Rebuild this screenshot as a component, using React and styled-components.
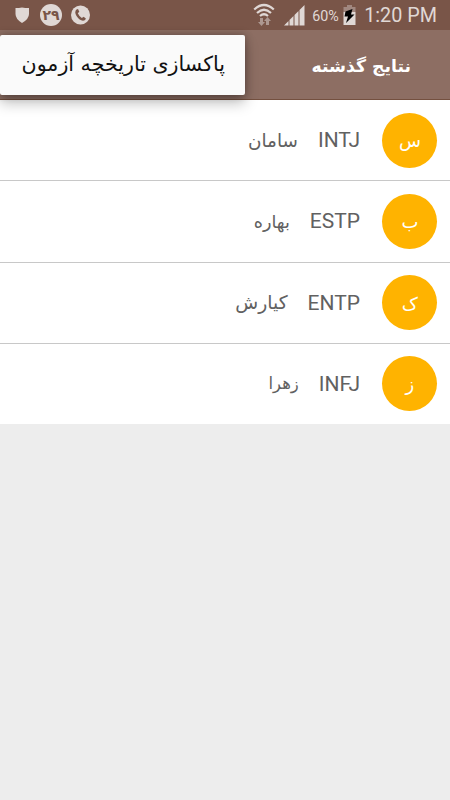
import React from "react";
import styled, { createGlobalStyle } from "styled-components";

const GlobalStyle = createGlobalStyle`
  * {
    box-sizing: border-box;
  }
  body {
    margin: 0;
    background: #ededed;
    font-family: Roboto, "DejaVu Sans", sans-serif;
  }
`;

const Screen = styled.div`
  position: relative;
  width: 450px;
  height: 800px;
  overflow: hidden;
  background: #ededed;
`;

const StatusBar = styled.header`
  display: flex;
  align-items: center;
  justify-content: space-between;
  height: 30px;
  padding: 0 13px 0 14px;
  background: #795548;
  color: #e0d8d5;
`;

const StatusGroup = styled.div`
  display: flex;
  align-items: center;
  height: 30px;
  gap: ${props => props.$gap || 0}px;
`;

const Day = styled.span`
  display: flex;
  align-items: center;
  justify-content: center;
  width: 22px;
  height: 22px;
  margin-left: 1px;
  border-radius: 50%;
  background: #e0d8d5;
  color: #795548;
  font: bold 14px/22px "DejaVu Sans", sans-serif;
`;

const Battery = styled.span`
  width: 28px;
  margin: 1px 3px 0 7px;
  font-size: 14.3px;
  white-space: nowrap;
`;

const Clock = styled.span`
  margin: 2px 0 0 8px;
  font-size: 19.8px;
  line-height: 30px;
  white-space: nowrap;
`;

const Toolbar = styled.div`
  display: flex;
  align-items: center;
  height: 70px;
  padding: 0 39px 0 0;
  border-bottom: 1px solid #74503f;
  background: #8d6e63;
`;

const Title = styled.h1`
  margin: 3px 0 0;
  color: #fff;
  font: bold 17.3px/30px "DejaVu Sans", sans-serif;
`;

const Menu = styled.div`
  position: absolute;
  top: 35px;
  left: 0;
  display: flex;
  align-items: center;
  width: 245px;
  height: 60px;
  padding: 0 20px 2px;
  border-radius: 2px;
  background: #fafafa;
  box-shadow: 0 8px 14px rgba(0, 0, 0, 0.25), 0 0 8px rgba(0, 0, 0, 0.3);
`;

const MenuItem = styled.span`
  color: #111;
  font: 20.6px/30px "DejaVu Sans", sans-serif;
  white-space: nowrap;
`;

const List = styled.ul`
  margin: 0;
  padding: 0;
  list-style: none;
`;

const Row = styled.li`
  display: flex;
  align-items: center;
  height: 81.33px;
  padding: 0 12.6px;
  border-bottom: 1px solid #c8c8c8;
  background: #fff;

  &:last-child {
    height: 80px;
    border-bottom: 0;
  }
`;

const Avatar = styled.div`
  display: flex;
  align-items: center;
  justify-content: center;
  width: 55px;
  height: 55px;
  padding-top: 2px;
  border-radius: 50%;
  background: #ffb300;
  color: #fff;
  font: 18px/30px "DejaVu Sans", sans-serif;
`;

const Type = styled.span`
  margin-right: 22.4px;
  color: #616161;
  font-size: 21px;
  line-height: 30px;
`;

const Name = styled.span`
  margin: 1px 20px 0 0;
  color: #616161;
  font: ${props => props.$size}px/30px "DejaVu Sans", sans-serif;
`;

const results = [
  { letter: "س", type: "INTJ", name: "سامان", size: 18.4 },
  { letter: "ب", type: "ESTP", name: "بهاره", size: 17.6 },
  { letter: "ک", type: "ENTP", name: "کیارش", size: 18.8 },
  { letter: "ز", type: "INFJ", name: "زهرا", size: 16.5 }
];

const ShieldIcon = () => (
  <svg width="16" height="18" viewBox="0 0 16 18" fill="#e0d8d5">
    <path d="M1.500 2Q5 2 8 1.500Q11 2 15 2V8Q15 13 8 17Q1.500 13 1.500 8Z" />
  </svg>
);

const CallIcon = () => (
  <svg width="20" height="20" viewBox="0 0 20 20">
    <circle cx="9.500" cy="10" r="9.500" fill="#e0d8d5" />
    <path
      d="M5.500 4.500Q3 7 5.500 11Q8.500 15.500 12 15.700Q14 15.500 15 13.700L12.700 11.800L10.800 13Q8 11 6.800 8.200L8.300 6.800L7 4Z"
      fill="#795548"
    />
  </svg>
);

const WifiIcon = () => (
  <svg width="22" height="24" viewBox="0 0 22 24" fill="none">
    <g stroke="#e0d8d5" strokeWidth="2.200">
      <path d="M1.200 6.500Q11 -2.500 20.800 6.500" />
      <path d="M4 10Q11 3.500 18 10" />
      <path d="M7 13Q11 9.500 15 13" />
    </g>
    <path d="M7 15H10V19H12L8.500 23L5 19H7Z" fill="#ad9891" />
    <path d="M13 22V18H11L14.500 14L18 18H16V22Z" fill="#ad9891" />
  </svg>
);

const SignalIcon = () => (
  <svg width="21" height="21" viewBox="0 0 21 21" fill="#e0d8d5">
    <path d="M0 20.500L4.500 16V20.500ZM5.500 20.500V15L9.500 11V20.500ZM10.500 20.500V10L14.500 6V20.500ZM15.500 20.500V5L20.500 0V20.500Z" />
  </svg>
);

const BatteryIcon = () => (
  <svg width="13" height="20" viewBox="0 0 13 20">
    <path d="M4 0H9V2H12.500V7H.5V2H4Z" fill="#a18880" />
    <path d="M.5 7H12.500V20H.5Z" fill="#e0d8d5" />
    <path d="M9.500 4L2.500 6.500L1.500 11.500H5L3 18L11.500 9.500H8Z" fill="#000" />
  </svg>
);

function App() {
  return (
    <>
      <GlobalStyle />
      <Screen>
        <StatusBar>
          <StatusGroup $gap={9}>
            <ShieldIcon />
            <Day>۲۹</Day>
            <CallIcon />
          </StatusGroup>
          <StatusGroup>
            <StatusGroup $gap={9}>
              <WifiIcon />
              <SignalIcon />
            </StatusGroup>
            <Battery>60%</Battery>
            <StatusGroup>
              <BatteryIcon />
            </StatusGroup>
            <Clock>1:20 PM</Clock>
          </StatusGroup>
        </StatusBar>
        <Toolbar dir="rtl">
          <Title>نتایج گذشته</Title>
        </Toolbar>
        <List dir="rtl">
          {results.map(result => (
            <Row key={result.name}>
              <Avatar>{result.letter}</Avatar>
              <Type>{result.type}</Type>
              <Name $size={result.size}>{result.name}</Name>
            </Row>
          ))}
        </List>
        <Menu dir="rtl">
          <MenuItem>پاکسازی تاریخچه آزمون</MenuItem>
        </Menu>
      </Screen>
    </>
  );
}

export default App;
